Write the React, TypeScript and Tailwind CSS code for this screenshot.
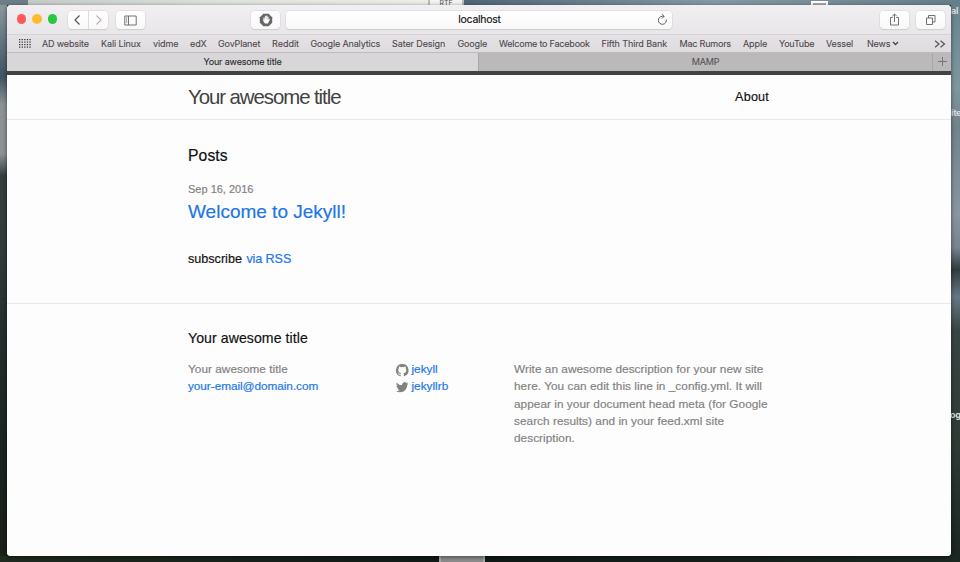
import React from "react";

const bookmarks: { label: string; box: string }[] = [
  { label: "AD website", box: "w-[59px] tracking-[-0.15px]" },
  { label: "Kali Linux", box: "w-[52px] tracking-[-0.1px]" },
  { label: "vidme", box: "w-[37px] tracking-[-0.1px]" },
  { label: "edX", box: "w-[28px] tracking-[-0.1px]" },
  { label: "GovPlanet", box: "w-[54px] tracking-[-0.15px]" },
  { label: "Reddit", box: "w-[38.5px]" },
  { label: "Google Analytics", box: "w-[81.5px] tracking-[-0.15px]" },
  { label: "Sater Design", box: "w-[65.5px] tracking-[-0.1px]" },
  { label: "Google", box: "w-[41.5px] tracking-[-0.15px]" },
  { label: "Welcome to Facebook", box: "w-[102.5px] tracking-[-0.2px]" },
  { label: "Fifth Third Bank", box: "w-[78px] tracking-[-0.1px]" },
  { label: "Mac Rumors", box: "w-[63.5px] tracking-[-0.2px]" },
  { label: "Apple", box: "w-[36px] tracking-[-0.1px]" },
  { label: "YouTube", box: "w-[47px] tracking-[-0.25px]" },
  { label: "Vessel", box: "w-[41px] tracking-[-0.15px]" },
  { label: "News", box: "w-[25px] tracking-[-0.2px]" },
];

const button =
  "flex h-[18px] items-center justify-center rounded-[4px] bg-gradient-to-b from-white to-[#f9f8f9] text-[#626262] shadow-[0_0_0_0.5px_#d5d1d5,0_1px_1px_#c9c5c9]";

function Toolbar() {
  return (
    <div className="flex h-[29px] items-center bg-gradient-to-b from-[#f1eff1] to-[#e9e6e9] pt-px">
      <div className="ml-[9.500px] mr-[0.500px] flex -translate-y-px gap-[6px]">
        <span className="size-[9.500px] rounded-full bg-[#fc5b57]" />
        <span className="size-[9.500px] rounded-full bg-[#fdbc2e]" />
        <span className="size-[9.500px] rounded-full bg-[#28c940]" />
      </div>
      <div className={button + " ml-[10.500px] w-[40px]"}>
        <svg width="40" height="18" viewBox="0 0 40 18" fill="none">
          <path d="M20.5 0V18" stroke="#dedbde" />
          <path d="M11.500 4.5L7 9L11.500 13.5" stroke="#555" strokeWidth="1.2" />
          <path d="M28.5 4.5L33 9L28.5 13.5" stroke="#b5b3b5" strokeWidth="1.1" />
        </svg>
      </div>
      <div className={button + " ml-[8px] w-[29px]"}>
        <svg width="13" height="11" viewBox="0 0 13 11" fill="none" stroke="currentColor">
          <path d="M.8 1h11.4v9H.8zM4.5 1v9M2 3h1.2M2 5h1.2M2 7h1.2" strokeWidth=".9" />
        </svg>
      </div>
      <div className={button + " ml-[106px] w-[29px]"}>
        <svg width="14" height="14" viewBox="0 0 14 14">
          <path d="M4.3.8h5.4l3.5 3.5v5.4l-3.5 3.5H4.3L.8 9.700V4.300z" fill="#686868" />
          <path d="M5 8V5M6.400 7V3.500M7.700 7V3M9 7.500V4" stroke="white" strokeWidth="1.1" strokeLinecap="round" />
          <path d="M4.500 6.500h5l1-.5c.7-.1.6.6.200 1L8.800 10.500H6.200C4.900 9.700 4.500 8.500 4.500 6.500z" fill="white" />
        </svg>
      </div>
      <div className={button + " relative ml-[6px] w-[386px]"}>
        <span className="pl-px pt-px text-[10.500px] leading-none tracking-[-0.28px] text-[#111] [-webkit-text-stroke:0.15px]">localhost</span>
        <svg className="absolute right-[4px] top-[3px]" width="11" height="12" viewBox="0 0 11 12" fill="none" stroke="currentColor">
          <path d="M9.300 5.500A4 4 0 1 1 5.500 2.300H7M5 .3l2.200 2L5 4.500" />
        </svg>
      </div>
      <div className={button + " ml-[208px] w-[29px]"}>
        <svg width="11" height="14" viewBox="0 0 11 14" fill="none" stroke="currentColor" strokeWidth=".9">
          <path d="M3.700 4.500H1.500v7.500h8V4.500H7.300M5.500 9V1M3.200 3.300L5.500 1l2.300 2.300" />
        </svg>
      </div>
      <div className={button + " ml-[7px] w-[29px]"}>
        <svg width="12" height="12" viewBox="0 0 12 12" fill="none" stroke="currentColor" strokeWidth=".9">
          <path d="M1.500 4h6v6.500h-6zM3.500 4V1.500H10V8H7.500" />
        </svg>
      </div>
    </div>
  );
}

function Bookmarks() {
  return (
    <div className="flex h-[18px] items-center border-t border-[#d6d2d6] bg-gradient-to-b from-[#e5e2e5] to-[#dfdbdf] pl-[12px] text-[9px] leading-none text-[#4c494c] [-webkit-text-stroke:0.1px]">
      <svg className="mr-[11px] shrink-0" width="12" height="9" viewBox="0 0 12 9" fill="#333">
        {[0, 2.6, 5.2, 7.8, 10.4].map((x) =>
          [0, 2.5, 5, 7.5].map((y) => <rect key={x + "-" + y} x={x} y={y} width="1.3" height="1.2" />)
        )}
      </svg>
      {bookmarks.map((b) => (
        <span key={b.label} className={"shrink-0 whitespace-nowrap " + b.box}>{b.label}</span>
      ))}
      <svg width="7" height="5" viewBox="0 0 7 5" fill="none" stroke="#444" strokeWidth="1.3"><path d="M1 1l2.500 2.500L6 1" /></svg>
      <svg className="ml-auto mr-[5px]" width="12" height="8" viewBox="0 0 12 8" fill="none" stroke="#555" strokeWidth="1.2"><path d="M1 .8l4 3.200-4 3.200M6.500.8l4 3.200-4 3.200" /></svg>
    </div>
  );
}

function Tabs() {
  return (
    <div className="flex h-[19px] items-center border-t border-[#bebbbe] bg-[#bcb9bb] pb-px text-[9px] leading-none tracking-[-0.15px] [-webkit-text-stroke:0.1px]">
      <div className="flex h-[18px] w-[471px] items-center justify-center bg-[#d8d6d8] text-[#292929]">Your awesome title</div>
      <div className="flex h-[18px] w-[455px] items-center justify-center border-x border-[#a9a6a8] text-[#555255]">MAMP</div>
      <div className="flex flex-1 justify-center">
        <svg width="9" height="9" viewBox="0 0 9 9" stroke="#77747a" strokeWidth="1"><path d="M0 4.500h9M4.500 0v9" /></svg>
      </div>
    </div>
  );
}

function Page() {
  return (
    <div className="flex h-[485px] flex-col bg-[#fdfdfd] font-['Liberation_Sans',Arial,sans-serif] text-[#111] [-webkit-text-stroke:0.18px]">
      <header className="flex h-[49px] shrink-0 items-center justify-between border-b border-t-[4px] border-b-[#e8e8e8] border-t-[#424442] pl-[181px] pr-[182px]">
        <span className="whitespace-nowrap text-[20.4px] leading-none tracking-[-1.06px] text-[#424242] [-webkit-text-stroke:0px]">Your awesome title</span>
        <span className="text-[12.600px] leading-none tracking-[0.2px]">About</span>
      </header>
      <main className="h-[184px] shrink-0 border-b border-[#e8e8e8] pl-[181px] pt-[26px]">
        <h1 className="text-[15.700px] leading-[20px] tracking-[0.1px]">Posts</h1>
        <p className="mt-[16px] text-[11px] leading-[14px] text-[#828282]">Sep 16, 2016</p>
        <h2 className="mt-[4px] text-[19px] leading-[24px] text-[#2176e6]">Welcome to Jekyll!</h2>
        <p className="mt-[27px] text-[12.600px] leading-[16px]">subscribe <span className="ml-px tracking-[-0.1px] text-[#2176e6]">via RSS</span></p>
      </main>
      <footer className="pl-[181px] pt-[25px]">
        <h2 className="text-[14.100px] leading-[18px] tracking-[0.07px]">Your awesome title</h2>
        <div className="mt-[14px] flex text-[11.800px] leading-[17.250px] text-[#828282]">
          <div className="w-[208px]">
            <div className="tracking-[0.03px]">Your awesome title</div>
            <div className="tracking-[-0.05px] text-[#2176e6]">your-email@domain.com</div>
          </div>
          <div className="w-[118px] text-[#2176e6]">
            <div className="flex items-center gap-[3px]">
              <svg className="mt-[2px]" width="12.500" height="12.500" viewBox="0 0 16 16" fill="#828282"><path d="M8 0a8 8 0 0 0-2.530 15.590c.4.070.55-.17.550-.38v-1.490c-2.230.48-2.690-.95-2.690-.95-.36-.92-.89-1.170-.89-1.170-.73-.5.060-.49.060-.49.800.06 1.230.83 1.230.83.710 1.220 1.870.87 2.330.66.070-.52.280-.87.510-1.070-1.780-.2-3.640-.89-3.640-3.950 0-.87.310-1.590.820-2.150-.08-.2-.36-1.020.080-2.120 0 0 .67-.21 2.200.82a7.600 7.600 0 0 1 4 0c1.530-1.030 2.200-.82 2.200-.82.440 1.100.160 1.920.080 2.120.510.560.820 1.280.820 2.150 0 3.070-1.870 3.750-3.650 3.950.290.250.540.730.540 1.480v2.200c0 .21.150.46.550.38A8 8 0 0 0 8 0z" /></svg>
              <span>jekyll</span>
            </div>
            <div className="flex items-center gap-[3px]">
              <svg className="mt-[1px]" width="12.500" height="12.500" viewBox="0 0 16 16" fill="#828282"><path d="M16 3.040c-.59.26-1.220.44-1.890.52.680-.41 1.200-1.050 1.440-1.820-.64.380-1.340.650-2.080.8A3.280 3.280 0 0 0 7.880 5.530 9.320 9.320 0 0 1 1.110 2.100a3.280 3.280 0 0 0 1.020 4.380c-.54-.02-1.040-.17-1.490-.41v.04c0 1.590 1.130 2.920 2.630 3.220-.49.130-.98.150-1.480.06.420 1.300 1.630 2.250 3.070 2.280A6.590 6.590 0 0 1 0 13.020 9.290 9.290 0 0 0 5.030 14.500c6.040 0 9.340-5 9.340-9.340v-.42c.64-.46 1.200-1.040 1.630-1.700z" /></svg>
              <span>jekyllrb</span>
            </div>
          </div>
          <div className="whitespace-nowrap tracking-[0.04px]">
            <div>Write an awesome description for your new site</div>
            <div>here. You can edit this line in _config.yml. It will</div>
            <div>appear in your document head meta (for Google</div>
            <div>search results) and in your feed.xml site</div>
            <div>description.</div>
          </div>
        </div>
      </footer>
    </div>
  );
}

export default function App() {
  return (
    <div className="relative flex h-[562px] w-[960px] flex-col overflow-hidden bg-[#1d2623] font-[Inter,sans-serif]">
      <div className="flex h-[5px] shrink-0">
        <div className="w-[28px] bg-[#6c7e87]" />
        <div className="w-[400px] bg-gradient-to-r from-[#c5cbc9] via-[#dfe2de] to-[#eeeee9]" />
        <div className="h-[5px] w-[36px] overflow-hidden border-x-2 border-[#bbb] bg-[#f3f3f3] text-center text-[7px] leading-[8px] text-[#555]">RTE</div>
        <div className="flex flex-1 bg-gradient-to-r from-[#4f6676] via-[#849aa4] to-[#657f88]">
          <div className="ml-[347px] mt-[1px] h-[4px] w-[17px] border-2 border-b-0 border-white bg-[#aaa]" />
        </div>
      </div>
      <div className="flex h-[551px] shrink-0">
        <div className="w-[7px] bg-[linear-gradient(to_bottom,#8a989f_0%,#405361_13%,#8c9296_18%,#8d9295_27%,#34403e_31%,#303c3a_45%,#232f2d_60%,#1b2520_80%,#192018_100%)]" />
        <div className="z-10 w-[944px] overflow-hidden rounded-[4px] bg-[#fdfdfd] shadow-[0_1px_4px_#0008]">
          <Toolbar />
          <Bookmarks />
          <Tabs />
          <Page />
        </div>
        <div className="flex-1 overflow-hidden bg-[linear-gradient(to_bottom,#68838e_0%,#7f979f_15%,#71838a_22%,#8796a2_38%,#778491_44%,#2f3d3d_48%,#657886_53%,#374543_59%,#303a35_80%,#1b2521_100%)] text-[9px] font-bold leading-[12px] tracking-[-0.3px] text-[#ddd]">
          <div>al</div>
          <div className="mt-[90px]">ite</div>
          <div className="mt-[290px] -ml-px">og</div>
        </div>
      </div>
      <div className="flex flex-1 bg-gradient-to-r from-[#202a20] via-[#101916] to-[#1b2821]">
        <div className="ml-[439px] w-[46px] border-x-2 border-[#aaa] bg-[#8c8c8c]" />
      </div>
    </div>
  );
}
